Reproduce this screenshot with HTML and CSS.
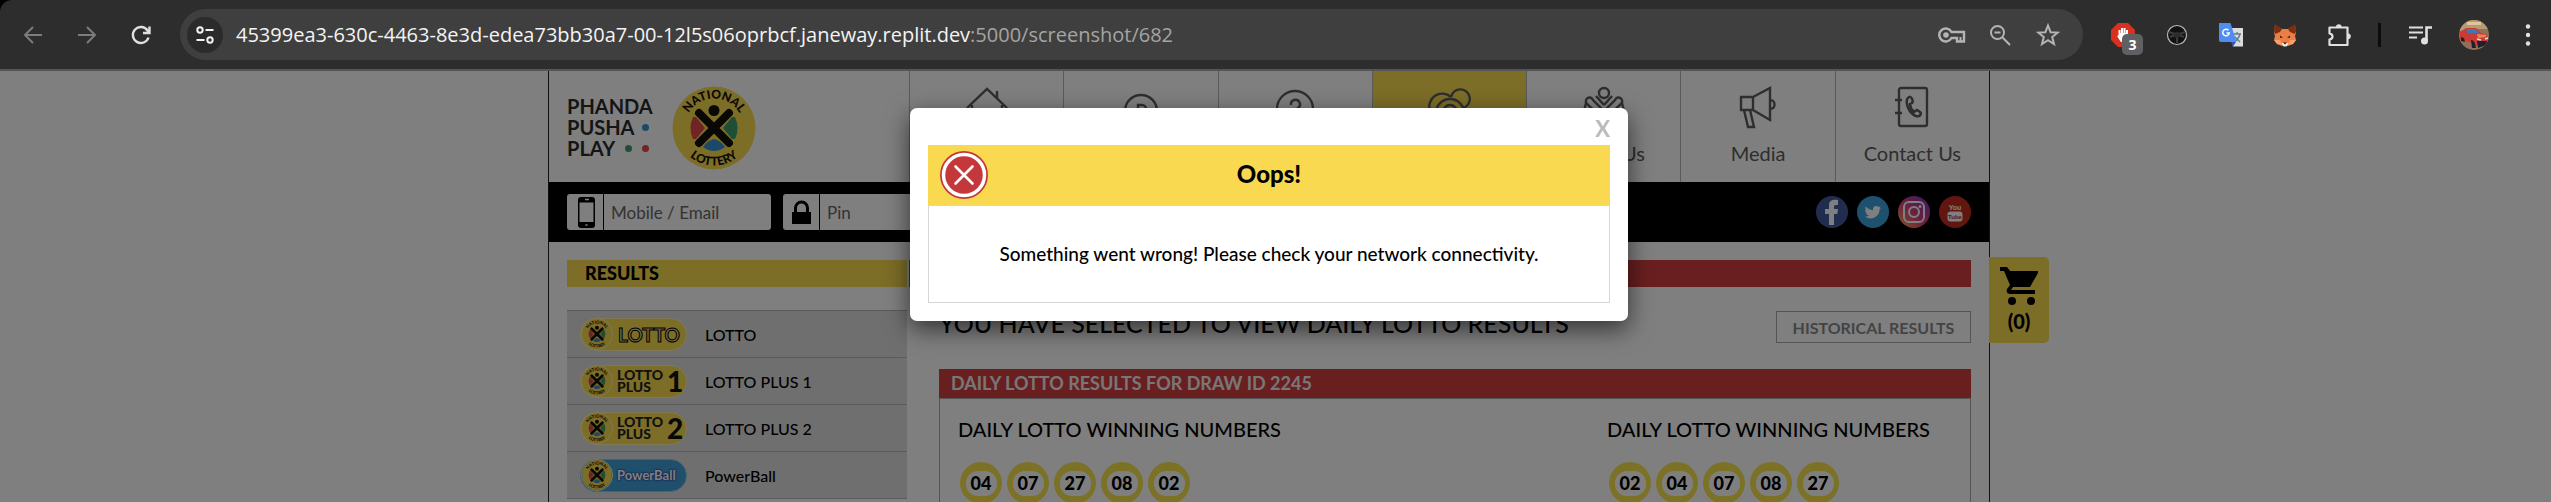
FILE: index.html
```html
<!DOCTYPE html>
<html lang="en">
<head>
<meta charset="utf-8">
<title>National Lottery - Results</title>
<link rel="stylesheet" href="styles.css">
</head>
<body>
<svg class="defs" aria-hidden="true">
  <defs>
    <path id="arc-top" d="M12.500 42a29.500 29.500 0 0 1 59 0"/>
    <path id="arc-bottom" d="M4.500 42a37.500 37.500 0 0 0 75 0"/>
    <linearGradient id="insta" x1="0" y1="1" x2="1" y2="0">
      <stop offset="0" stop-color="#ffb04a"/><stop offset=".45" stop-color="#e0407c"/><stop offset="1" stop-color="#6a35c8"/>
    </linearGradient>
    <symbol id="badge" viewBox="0 0 84 84">
      <circle cx="42" cy="42" r="41.500" fill="#f8da4f"/>
      <path d="M21 31q-5 11 0 22l3 0 9-11-9-11z" fill="#e0484c"/>
      <path d="M63 31q5 11 0 22l-3 0-9-11 9-11z" fill="#3c9c6a"/>
      <path d="M31 61q11 8 22 0-5-7-11-8-6 1-11 8z" fill="#3a93d0"/>
      <path d="M27 27l30 30M57 27L27 57" stroke="#14110a" stroke-width="8" stroke-linecap="round"/>
      <circle cx="42" cy="24.500" r="5.500" fill="#14110a"/>
      <text class="badge-text" text-anchor="middle"><textPath href="#arc-top" startOffset="50%">NATIONAL</textPath></text>
      <text class="badge-text" text-anchor="middle"><textPath href="#arc-bottom" startOffset="50%">LOTTERY</textPath></text>
    </symbol>
  </defs>
</svg>

<div class="window">
  <header class="toolbar">
    <div class="nav-buttons">
      <button class="tool dim" aria-label="Back"><svg viewBox="0 0 24 24"><path d="M21 12H4M12 4l-8 8 8 8"/></svg></button>
      <button class="tool dim" aria-label="Forward"><svg viewBox="0 0 24 24"><path d="M3 12h17M12 4l8 8-8 8"/></svg></button>
      <button class="tool" aria-label="Reload"><svg viewBox="0 0 24 24"><path d="M19.500 14.500a8 8 0 1 1-1-7l1.500 2M20.500 3.500v6.500h-6.500" stroke-width="2.400"/></svg></button>
    </div>
    <div class="omnibox">
      <button class="site-info" aria-label="Site information"><svg viewBox="0 0 24 24"><circle cx="7" cy="7" r="2.700"/><path d="M12.500 7h8M3.500 17h8"/><circle cx="17" cy="17" r="2.700"/></svg></button>
      <div class="url">45399ea3-630c-4463-8e3d-edea73bb30a7-00-12l5s06oprbcf.janeway.replit.dev<span>:5000/screenshot/682</span></div>
      <div class="omni-actions">
        <button class="tool soft" aria-label="Passwords"><svg class="wide" viewBox="0 0 30 24"><path d="M14.500 9A6.500 6.500 0 1 0 14.500 15h5.500v3.500h7V9z" stroke-width="2.400"/><circle cx="9" cy="12" r="2.800" fill="currentColor" stroke="none"/><path d="M23.500 14v4" /></svg></button>
        <button class="tool soft" aria-label="Zoom"><svg viewBox="0 0 24 24"><circle cx="9.500" cy="9.500" r="6.500"/><path d="M14.500 14.500l7.500 7.500M6.500 9.500h6"/></svg></button>
        <button class="tool soft" aria-label="Bookmark"><svg viewBox="0 0 24 24"><path d="M12 2.500l2.600 6.700 7.100.4-5.500 4.500 1.800 6.900-6-3.900-6 3.900 1.800-6.900-5.500-4.500 7.100-.4z" stroke-linejoin="miter"/></svg></button>
      </div>
    </div>
    <div class="extensions">
      <button class="tool blocker" aria-label="Ad blocker"><svg viewBox="0 0 24 24"><path d="M7 0h10l7 7v10l-7 7H7l-7-7V7z" fill="#d9301f" stroke="none"/><path d="M8.500 13V7M11 12V5M13.500 12V5M16 12V7M7 12.500l3 5h4l3-6" stroke="#fff" stroke-width="2"/><path d="M8 10h9v5l-3 4h-4z" fill="#fff" stroke="none"/></svg><span class="count">3</span></button>
      <button class="tool" aria-label="Dark extension"><svg viewBox="0 0 24 24"><circle cx="12" cy="12" r="9.500" fill="#111" stroke="#b8b8b8" stroke-width="1.200"/><path d="M4 9q8 4 16 0M12 13v7M5 14l5-2M19 14l-5-2" stroke="#3c3c3c"/><circle cx="12" cy="12" r="3" fill="#2c2c2c" stroke="none"/></svg></button>
      <button class="tool" aria-label="Translate"><svg viewBox="0 0 24 24"><path d="M11 5h13v18.500H14z" fill="#dcdcdc" stroke="none"/><path d="M14 11h8M18 9v2M21 11c-1 4-3 6-6 8M15.500 13.500l5.500 5.500" stroke="#607d8b" stroke-width="1.400"/><path d="M12 19h5l-3 4.500z" fill="#3354c4" stroke="none"/><path d="M0 0h11.500l6 19H2a2 2 0 0 1-2-2z" fill="#4f8df0" stroke="none"/><path d="M9.500 7.300a3.300 3.300 0 1 0 .8 2.700H7.500" stroke="#fff" stroke-width="1.500"/></svg></button>
      <button class="tool" aria-label="Wallet"><svg viewBox="0 0 24 24"><path d="M2 2l7 4h6l7-4 1 8-1 3 1 4-3 4-5 2H9l-5-2-3-4 1-4-1-3z" fill="#ec7e45" stroke="none"/><path d="M2 1l7 5-2 3-5 2-1-3zM22 1l-7 5 2 3 5 2 1-3z" fill="#7a2e12" stroke="none"/><path d="M1 17l6 0 2 5-5-1zM23 17l-6 0-2 5 5-1z" fill="#f6a06c" stroke="none"/><path d="M7 12.500l3 2-3 .5zM17 12.500l-3 2 3 .5z" fill="#3a2a26" stroke="none"/><path d="M8.500 20h7l-2 3.500h-3z" fill="#f0ece8" stroke="none"/><path d="M10 19.500h4l-2 2z" fill="#222" stroke="none"/></svg></button>
      <button class="tool" aria-label="Extensions"><svg viewBox="0 0 24 24"><path d="M2.500 4.500H20.500V22H2.500v-5.500q3-.5 3-3t-3-3z" stroke-width="2.200" stroke-linejoin="round"/><path d="M9 4a2.800 2.800 0 0 1 5.600 0zM21 10.500a2.800 2.800 0 0 1 0 5.600z" fill="#e0e0e0" stroke="none"/></svg></button>
      <span class="divider"></span>
      <button class="tool" aria-label="Media"><svg viewBox="0 0 24 24"><path d="M1 4.500h14M1 9.500h14M1 14.500h8" /><path d="M18.500 18V4.500H24" stroke-width="2.600"/><circle cx="16.500" cy="18" r="3.500" fill="#e0e0e0" stroke="none"/></svg></button>
      <button class="tool avatar" aria-label="Profile"><svg viewBox="0 0 30 30"><clipPath id="av"><circle cx="15" cy="15" r="15"/></clipPath><g clip-path="url(#av)" stroke="none"><path d="M0 0h30v30H0z" fill="#8f7159"/><path d="M0 0h30v9l-12 0-18 2z" fill="#b59a72"/><path d="M8 2h14v3H8z" fill="#dcc79c"/><path d="M1 12l6-4h10l5 5 6 2 1 8-8 4-8-4-12-4z" fill="#cc3a34"/><path d="M7 9h9l4 4H8z" fill="#3f79b5"/><path d="M18 14l9 1v2l-8 1z" fill="#e9855c"/><path d="M2 17l3 1 1 4-4-1zM12 20q4 0 5 8h-4zM18 21l10 0-1 4-8 3z" fill="#20202c"/><path d="M18 19l4 1M26 19l3-1" stroke="#cfe0f0" stroke-width="1.500"/></g></svg></button>
      <button class="tool" aria-label="Menu"><svg viewBox="0 0 24 24"><g fill="#e0e0e0" stroke="none"><circle cx="12" cy="3.500" r="2.200"/><circle cx="12" cy="12" r="2.200"/><circle cx="12" cy="20.500" r="2.200"/></g></svg></button>
    </div>
  </header>

  <div class="viewport">
    <div class="site">
      <div class="masthead">
        <a class="brand" href="#">
          <span class="slogan">
            <span>PHANDA</span>
            <span>PUSHA<i class="dots"><i class="dot blue"></i></i></span>
            <span>PLAY<i class="dots"><i class="dot green"></i><i class="dot red"></i></i></span>
          </span>
          <svg class="emblem" viewBox="0 0 84 84"><use href="#badge"/></svg>
        </a>
        <nav class="menu">
          <a href="#"><svg viewBox="0 0 44 44"><path d="M2 23L22 4l20 19M7 20v20h30V20M32 13V6"/></svg>Home</a>
          <a href="#"><svg viewBox="0 0 44 44"><circle cx="22" cy="26" r="16"/><path d="M19 34V20h4a4 4 0 0 1 0 8h-4M23 28l4 6"/></svg>Play Now</a>
          <a href="#"><svg viewBox="0 0 44 44"><circle cx="22" cy="24" r="18"/><path d="M18 20a4.500 4.500 0 1 1 7 3q-3 2-3 5M22 32v2"/></svg>How to Play</a>
          <a href="#" class="active"><svg viewBox="0 0 44 44"><path d="M3 26A13 13 0 0 1 24 12M24 12A9.500 9.500 0 1 1 36 23"/><circle cx="23" cy="28" r="14"/><circle cx="23" cy="27" r="7"/></svg>Results</a>
          <a href="#"><svg viewBox="0 0 44 44"><circle cx="22" cy="8" r="5"/><path d="M22 26L11 15c-3-6-10 0-6 4l15 14M22 26l11-11c3-6 10 0 6 4L24 33M22 20l-8-9M22 20l8-9M4 18L2 26l12 14h16l12-14-2-8"/></svg>About Us</a>
          <a href="#"><svg viewBox="0 0 44 44"><path d="M5 12h12v13H5zM17 12L34 3v32l-17-10M34 15c6 0 6 9 0 9M8 25l4 17h6l-4-17"/></svg>Media</a>
          <a href="#"><svg viewBox="0 0 44 44"><rect x="9" y="3" width="28" height="38" rx="2"/><path d="M5 15h7M5 28h7"/><path d="M19 12c-5 3-1 16 7 19 4 1 6-2 4-4l-3-2-3 2c-3-3-4-6-4-8l2-1c2-2-1-7-3-6z" stroke-width="2.500"/></svg>Contact Us</a>
        </nav>
      </div>

      <form class="login">
        <div class="field">
          <label for="user" aria-label="Mobile or email"><svg viewBox="0 0 36 36"><path d="M14 3h11a3 3 0 0 1 3 3v25a3 3 0 0 1-3 3H14a3 3 0 0 1-3-3V6a3 3 0 0 1 3-3z" fill="#000"/><path d="M12.500 8.500h14V28h-14z" fill="#fff"/><path d="M18 5.500h4M18.500 31h2" stroke="#fff" stroke-width="1.500"/></svg></label>
          <input id="user" type="text" placeholder="Mobile / Email">
        </div>
        <div class="field">
          <label for="pin" aria-label="Pin"><svg viewBox="0 0 36 36"><path d="M9 18h19v12H9z" fill="#000"/><path d="M12.500 19v-5a6 6 0 0 1 12 0v5" fill="none" stroke="#000" stroke-width="3"/></svg></label>
          <input id="pin" type="password" placeholder="Pin">
        </div>
        <div class="social">
          <a href="#" aria-label="Facebook"><svg viewBox="0 0 32 32"><circle cx="16" cy="16" r="16" fill="#405b9e"/><path d="M13 29V18H9v-5h4V9c0-4 3-6 9-5v5h-2c-1.500 0-2 .7-2 2v2h4l-.7 5H18v11z" fill="#fff"/></svg></a>
          <a href="#" aria-label="Twitter"><svg viewBox="0 0 32 32"><circle cx="16" cy="16" r="16" fill="#3da2dc"/><path d="M8 20.500c2 .2 3-.3 4-1-1.500 0-2.700-1-3-2.200h1.300C8.800 16.500 8 15.500 8 14l1.400.4C8 13 8 11.500 8.700 10.500c2 2.200 4.300 3.500 7.300 3.700-.6-3.800 3.500-5.200 5.700-3.200l2-.8-1.200 2 1.700-.4-1.700 1.700c.2 6.500-7.500 12-14.500 7z" fill="#fff"/></svg></a>
          <a href="#" aria-label="Instagram"><svg viewBox="0 0 32 32"><circle cx="16" cy="16" r="16" fill="url(#insta)"/><rect x="6" y="6" width="20" height="20" rx="5" fill="none" stroke="#fff" stroke-width="2"/><circle cx="16" cy="16" r="5" fill="none" stroke="#fff" stroke-width="2"/><circle cx="22" cy="10.500" r="1.500" fill="#fff"/></svg></a>
          <a href="#" aria-label="YouTube"><svg viewBox="0 0 32 32"><circle cx="16" cy="16" r="16" fill="#c62c20"/><rect x="8.500" y="15.500" width="15" height="10" rx="3" fill="#fff"/><text class="yt" x="16" y="13.500" text-anchor="middle" fill="#fff">You</text><text class="yt small" x="16" y="23" text-anchor="middle" fill="#c62c20">Tube</text></svg></a>
        </div>
      </form>

      <div class="columns">
        <aside>
          <h2 class="side-title">RESULTS</h2>
          <ul class="games">
            <li><a href="#"><span class="pill"><svg viewBox="0 0 84 84"><use href="#badge"/></svg><b class="outline">LOTTO</b></span>LOTTO</a></li>
            <li><a href="#"><span class="pill"><svg viewBox="0 0 84 84"><use href="#badge"/></svg><span class="stack"><span>LOTTO</span><span>PLUS</span></span><b class="digit">1</b></span>LOTTO PLUS 1</a></li>
            <li><a href="#"><span class="pill"><svg viewBox="0 0 84 84"><use href="#badge"/></svg><span class="stack"><span>LOTTO</span><span>PLUS</span></span><b class="digit">2</b></span>LOTTO PLUS 2</a></li>
            <li><a href="#"><span class="pill power"><svg viewBox="0 0 84 84"><use href="#badge"/></svg><b>PowerBall</b></span>PowerBall</a></li>
          </ul>
        </aside>
        <main>
          <div class="main-bar"></div>
          <div class="results">
            <div class="heading">
              <h1>YOU HAVE SELECTED TO VIEW DAILY LOTTO RESULTS</h1>
              <button class="history">HISTORICAL RESULTS</button>
            </div>
            <h2 class="draw-title">DAILY LOTTO RESULTS FOR DRAW ID 2245</h2>
            <div class="draw">
              <section>
                <h3>DAILY LOTTO WINNING NUMBERS</h3>
                <div class="balls"><span><b>04</b></span><span><b>07</b></span><span><b>27</b></span><span><b>08</b></span><span><b>02</b></span></div>
              </section>
              <section>
                <h3>DAILY LOTTO WINNING NUMBERS</h3>
                <div class="balls"><span><b>02</b></span><span><b>04</b></span><span><b>07</b></span><span><b>08</b></span><span><b>27</b></span></div>
              </section>
            </div>
          </div>
        </main>
      </div>

      <a class="cart" href="#"><svg viewBox="0 0 40 40"><path d="M1 1h7l3 4h28v2l-8 14H14l-2 3h24v4H11c-3 0-4-3-3-5l3-4L5 5H1z" fill="#000"/><circle cx="13" cy="35" r="4"/><circle cx="32" cy="35" r="4"/></svg>(0)</a>
    </div>

    <div class="overlay">
      <div class="dialog" role="dialog" aria-labelledby="dialog-title">
        <button class="close" aria-label="Close">X</button>
        <div class="dialog-head">
          <svg viewBox="0 0 48 48"><circle cx="24" cy="24" r="24" fill="#c4383c"/><circle cx="24" cy="24" r="20.500" fill="none" stroke="#fff" stroke-width="3.500"/><path d="M15.500 15.500l17 17M32.500 15.500l-17 17" stroke="#fff" stroke-width="2.600" stroke-linecap="round"/></svg>
          <h2 id="dialog-title">Oops!</h2>
        </div>
        <p class="dialog-body">Something went wrong! Please check your network connectivity.</p>
      </div>
    </div>
  </div>
</div>
</body>
</html>
```
FILE: styles.css
```css
* { box-sizing: border-box; }

body {
  margin: 0;
  font-family: Lato, "Liberation Sans", sans-serif;
  color: #000;
  background: #000;
}

h1, h2, h3, p, ul { margin: 0; padding: 0; }
a { color: inherit; text-decoration: none; }
button { font: inherit; padding: 0; border: 0; background: none; }
svg { display: block; }
.defs { position: absolute; width: 0; height: 0; }

.window {
  display: flex;
  flex-direction: column;
  height: 100vh;
}

/* Browser toolbar */
.toolbar {
  display: flex;
  align-items: center;
  height: 71px;
  padding-left: 20px;
  padding-right: 10px;
  background: #2d2d2d;
  border-bottom: 2px solid #555;
  border-top-left-radius: 12px;
}
.nav-buttons { display: flex; gap: 28px; width: 160px; }
.tool {
  position: relative;
  display: flex;
  align-items: center;
  justify-content: center;
  width: 26px;
  height: 26px;
  color: #e0e0e0;
}
.tool svg, .site-info svg {
  width: 24px;
  height: 24px;
  fill: none;
  stroke: currentColor;
  stroke-width: 2;
}
.tool svg.wide { width: 30px; flex: none; }
.tool.dim { color: #7c7c7c; }
.tool.soft { color: #b4b4b4; }
.omnibox {
  display: flex;
  flex: 1;
  align-items: center;
  height: 51px;
  padding: 0 22px 0 7px;
  border-radius: 26px;
  background: #3f3f3f;
}
.site-info {
  display: grid;
  place-items: center;
  width: 36px;
  height: 36px;
  border-radius: 50%;
  background: #2b2b2b;
  color: #f2f2f2;
}
.url {
  flex: 1;
  padding-left: 13px;
  font: 20px/28px "Open Sans", "Noto Sans", sans-serif;
  color: #f4f4f4;
}
.url span { color: #a4a4a4; }
.omni-actions { display: flex; gap: 22px; }
.extensions {
  display: flex;
  align-items: center;
  gap: 28px;
  padding-left: 27px;
}
.count {
  position: absolute;
  left: 12px;
  top: 12px;
  width: 21px;
  height: 21px;
  border-radius: 5px;
  background: #5f6062;
  color: #fff;
  font: bold 14px/21px "Open Sans", sans-serif;
}
.divider { width: 3px; height: 24px; margin: 0 -2px; background: #0c0c0c; }
.tool.avatar svg { flex: none; width: 30px; height: 30px; }

/* Page */
.viewport {
  position: relative;
  flex: 1;
  min-height: 0;
  overflow: hidden;
  padding-right: 13px;
  background: #fff;
}
.site {
  position: relative;
  max-width: 1442px;
  min-height: 100%;
  margin: 0 auto;
  border: solid #222;
  border-width: 0 1px;
}
.masthead { display: flex; height: 111px; }
.brand {
  display: flex;
  gap: 20px;
  width: 360px;
  padding: 15px 18px 0;
}
.slogan {
  width: 85px;
  padding-top: 10px;
  font-size: 20px;
  font-weight: 700;
  line-height: 21px;
  color: #2b2b2b;
}
.slogan > span {
  display: flex;
  align-items: center;
  justify-content: space-between;
  padding-right: 3px;
}
.dots { display: flex; gap: 10px; }
.dot { width: 7px; height: 7px; border-radius: 50%; }
.dot.blue { background: #3a93d0; }
.dot.green { background: #3c9c6a; }
.dot.red { background: #e0484c; }
.emblem { width: 84px; height: 84px; }
.badge-text { font-family: Lato, sans-serif; font-size: 12px; font-weight: 900; fill: #14110a; }

.menu {
  display: grid;
  flex: 1;
  grid-template-columns: repeat(7, 1fr);
}
.menu a {
  display: flex;
  flex-direction: column;
  align-items: center;
  gap: 9px;
  padding-top: 14px;
  border-left: 1px solid #b4b4b4;
  font-size: 20px;
  line-height: 30px;
  color: #5c5c5c;
}
.menu svg { width: 44px; height: 44px; fill: none; stroke: #5c5c5c; stroke-width: 2.400; }
.menu .active { background: #f8da4f; }

.login {
  display: flex;
  align-items: center;
  gap: 12px;
  height: 60px;
  padding: 0 18px;
  background: #000;
}
.field {
  display: flex;
  width: 204px;
  height: 36px;
  border-radius: 3px;
  background: #fff;
  overflow: hidden;
}
.field label { width: 37px; border-right: 1px solid #000; }
.field svg { width: 36px; height: 36px; }
.field input {
  flex: 1;
  min-width: 0;
  padding: 0 7px;
  border: 0;
  background: none;
  font: 17px Lato, sans-serif;
}
.field input::placeholder { color: #666; opacity: 1; }
.social { display: flex; gap: 9px; margin-left: auto; }
.social svg { width: 32px; height: 32px; }
.yt { font: bold 7px "Liberation Sans", sans-serif; }
.yt.small { font-size: 6px; }

.columns {
  display: grid;
  grid-template-columns: 340px 1fr;
  gap: 2px;
  padding: 18px;
}
.side-title {
  padding-left: 18px;
  background: #f8da4f;
  font-size: 18px;
  font-weight: 900;
  line-height: 27px;
}
.games { margin-top: 23px; list-style: none; border-bottom: 1px solid #b4b4b4; }
.games li { border-top: 1px solid #b4b4b4; background: #dfdfdf; }
.games a {
  display: flex;
  align-items: center;
  gap: 18px;
  height: 46px;
  padding-left: 13px;
  font-size: 16px;
  font-weight: 500;
}
.pill {
  display: flex;
  align-items: center;
  gap: 4px;
  width: 107px;
  height: 33px;
  border: 1px solid #fff3b0;
  border-radius: 17px;
  background: #f8da4f;
}
.pill svg { flex: none; width: 32px; height: 32px; border: 1px solid #fff3b0; border-radius: 50%; }
.pill b { font-size: 20px; }
.pill .outline {
  padding-left: 1px;
  font-weight: 700;
  font-size: 19px;
  color: #e4d58c;
  -webkit-text-stroke: 1px #000;
}
.stack {
  display: flex;
  flex-direction: column;
  font-size: 14px;
  font-weight: 900;
  line-height: 12px;
  color: #222;
}
.pill .digit { font-size: 28px; font-weight: 900; color: #111; }
.pill.power { background: #409fd8; border-color: #8ec6e6; }
.pill.power b { font-size: 13px; color: #fff; text-shadow: 0 0 2px #2a2a90, 0 0 2px #2a2a90; }

.main-bar { height: 27px; background: #d23e3f; }
.results { padding-left: 30px; }
.heading {
  display: flex;
  justify-content: space-between;
  align-items: flex-start;
  height: 82px;
  padding-top: 24px;
}
h1 { font-size: 25px; font-weight: 500; line-height: 24px; }
.history {
  width: 195px;
  height: 32px;
  border: 1px solid #aaa;
  color: #888;
  font-size: 16px;
  font-weight: 700;
}
.draw-title {
  padding-left: 12px;
  background: #d23e3f;
  color: #eee;
  font-size: 18px;
  font-weight: 700;
  line-height: 29px;
}
.draw {
  display: flex;
  justify-content: space-between;
  padding: 15px 40px 24px 18px;
  border: 1px solid #aaa;
}
h3 { font-size: 20px; font-weight: 500; line-height: 30px; }
.balls { display: flex; gap: 5px; padding: 18px 0 0 2px; }
.balls span {
  display: grid;
  place-items: center;
  width: 42px;
  height: 42px;
  border-radius: 50%;
  background: #f7e24f;
}
.balls b {
  width: 31px;
  border-radius: 12px;
  background: #fff;
  font-size: 18px;
  font-weight: 900;
  line-height: 25px;
  text-align: center;
}

.cart {
  position: absolute;
  left: 100%;
  top: 186px;
  display: flex;
  flex-direction: column;
  align-items: center;
  width: 60px;
  padding: 9px 0 6px;
  border-radius: 0 5px 5px 0;
  background: #f8da4f;
  font-size: 20px;
  font-weight: 900;
  line-height: 31px;
}
.cart svg { width: 40px; height: 40px; }

/* Error dialog */
.overlay {
  position: absolute;
  inset: 0;
  padding: 37px 13px 0 0;
  background: rgba(0, 0, 0, .5);
}
.dialog {
  width: 718px;
  margin: 0 auto;
  padding: 0 18px 18px;
  border-radius: 7px;
  background: #fff;
  box-shadow: 0 8px 24px rgba(0, 0, 0, .6);
}
.close {
  display: block;
  height: 37px;
  margin-left: auto;
  padding-top: 3px;
  color: #bbb;
  font-size: 22px;
  font-weight: 700;
}
.dialog-head {
  display: grid;
  grid-template-columns: 48px 1fr 48px;
  align-items: center;
  height: 60px;
  padding: 0 12px;
  background: #f8d94f;
}
.dialog-head svg { width: 48px; height: 48px; }
.dialog-head h2 {
  font-size: 24px;
  font-weight: 900;
  line-height: 26px;
  padding-bottom: 2px;
  text-align: center;
}
.dialog-body {
  padding: 35px 0;
  border: 1px solid #d6d6d6;
  font-size: 19px;
  font-weight: 500;
  line-height: 26px;
  text-align: center;
}
```
